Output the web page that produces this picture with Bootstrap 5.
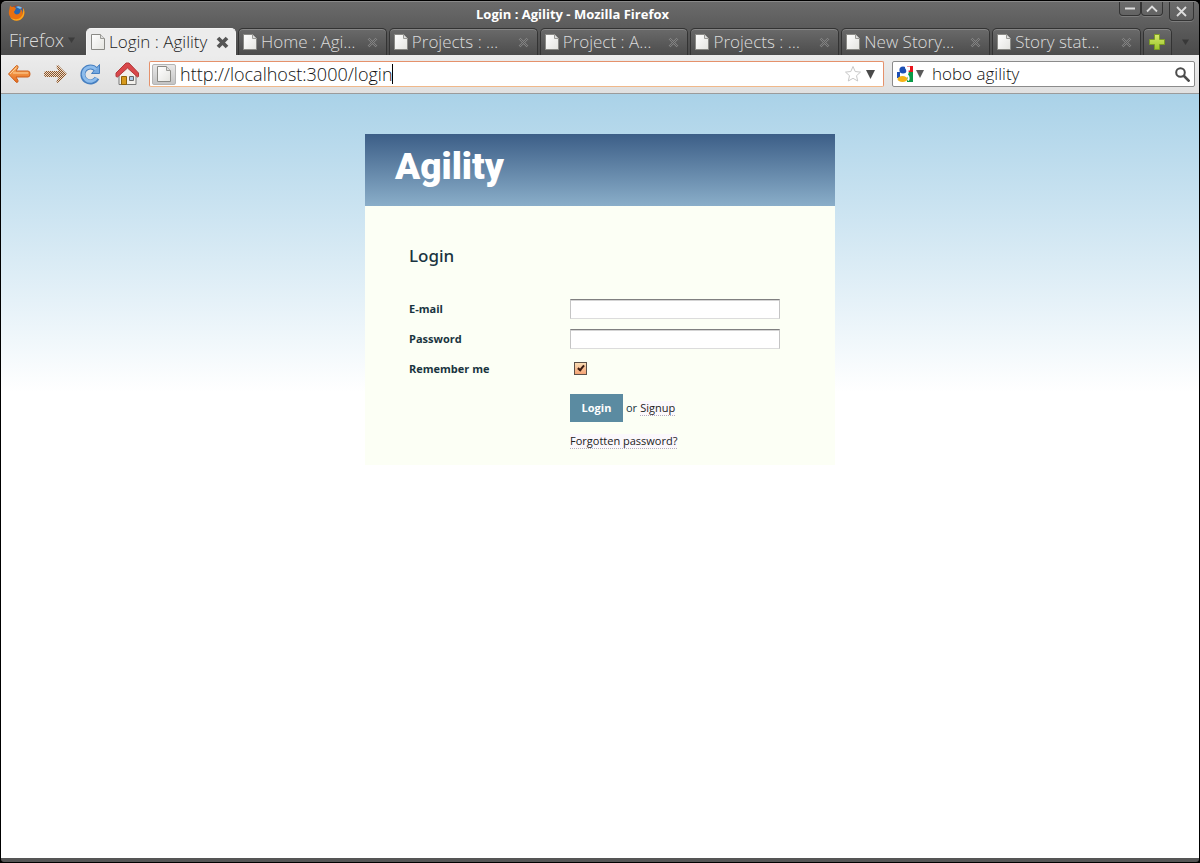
<!DOCTYPE html>
<html lang="en">
<head>
<meta charset="utf-8">
<meta name="viewport" content="width=device-width, initial-scale=1">
<title>Login : Agility</title>
<link href="https://cdn.jsdelivr.net/npm/bootstrap@5.3.0/dist/css/bootstrap.min.css" rel="stylesheet">
<style>
  body { background: #000; font-family: "Open Sans", "Noto Sans", sans-serif; }
  svg { display: block; flex: none; }
  button { background: none; border: 0; padding: 0; color: inherit; }
  .window { min-height: 100vh; padding: 1px; }
  .chrome { background: linear-gradient(#6b6b6b, #4a4a4a); border-top: 1px solid #8a8a8a; border-radius: 5px 5px 0 0; color: #dcdcdc; }
  .titlebar { height: 26px; padding-left: 7px; padding-right: 5px; }
  .win-title { font-size: 13px; font-weight: 700; line-height: 24px; color: #fff; }
  .win-btn { width: 22px; height: 14px; border: 1px solid #343434; border-top: 0; border-radius: 0 0 4px 4px; box-shadow: 0 1px 0 #7d7d7d; display: flex; align-items: center; justify-content: center; }
  .win-btn.close-win { width: 25px; height: 19px; margin-left: 6px; }
  .tabstrip { height: 27px; font-size: 17px; font-weight: 300; line-height: 24px; }
  .menu-btn { width: 85px; padding: 0 0 3px 8px; font-size: 18px; font-weight: 300; }
  .tabs { min-width: 0; gap: 2px; }
  .tab-item { height: 27px; min-width: 0; flex: 1 1 0; padding: 0 8px 0 4px; border: 1px solid #333; border-bottom: 0; border-radius: 5px 5px 0 0; background: linear-gradient(#6a6a6a, #4c4c4c); box-shadow: inset 0 1px 0 #858585; }
  .tab-item.current { flex: 0 0 150px; background: #ececec; color: #1c1c1c; border-color: #f4f4f4; box-shadow: none; padding-right: 6px; }
  .tab-item.tab-new { flex: 0 0 29px; padding: 0; }
  .tab-more { width: 27px; }
  .toolbar { height: 39px; background: linear-gradient(#ececec, #e0e0e0); border-bottom: 1px solid #9b9b9b; padding: 0 4px 0 6px; }
  .nav-btns { width: 142px; }
  .field { height: 26px; background: #fff; border: 1px solid #8b8b8b; border-radius: 2px; }
  .field input { border: 0; outline: 0; padding: 0; min-width: 0; font-size: 17px; font-weight: 300; line-height: 24px; color: #111; background: none; }
  .address { border-color: #e5916b; border-bottom-color: #f0b88a; }
  .site-id { width: 24px; height: 21px; margin: 0 4px 0 2px; border: 1px solid #b4b4b4; border-radius: 2px; background: linear-gradient(#e8e8e8, #c4c4c4); }
  .caret { width: 1px; height: 20px; background: #000; }
  .field.address input { width: 212px; font-size: 18px; }
  .search { width: 303px; }
  .page { background: #fff linear-gradient(#aad2e8, #fff) 0 0 / 100% 298px no-repeat; padding: 40px 16px; }
  .login-card { max-width: 470px; background: #fcfff5; color: #193440; font-size: 11px; }
  .login-head { height: 72px; padding: 0 30px; background: linear-gradient(#3c5e87, #8aaec9); }
  .login-head h1 { font-family: Roboto, sans-serif; font-size: 37px; font-weight: 900; line-height: 66px; color: #fff; margin: 0; }
  .login-body { padding: 38px 44px 16px; }
  .login-body h2 { font-family: "Noto Sans", sans-serif; font-size: 17px; font-weight: 500; line-height: 24px; margin: 0 0 26px; }
  .form-line { height: 30px; display: flex; align-items: center; }
  .form-line label, .spacer { width: 161px; margin: 0; flex: none; font-weight: 700; }
  .form-line .text-in { width: 210px; height: 20px; margin: 0; padding: 0 3px; background: #fff; border: 1px solid #c4c4c4; border-top-color: #808080; border-bottom-color: #dcdcdc; border-radius: 0; box-shadow: inset 0 1px 0 #d4d4d4; }
  .remember { appearance: none; width: 13px; height: 13px; margin: 0 0 2px 4px; border: 1px solid #5d5048; background: linear-gradient(#f9dcb4, #f5a476); position: relative; }
  .remember:checked::after { content: ""; position: absolute; left: 4px; top: 1px; width: 4px; height: 7px; border: solid #3a1a10; border-width: 0 2px 2px 0; transform: rotate(40deg); }
  .form-actions { gap: 3px; margin-top: 10px; }
  .form-actions .spacer { margin-right: -3px; }
  .submit { background: #5b8ba1; color: #fff; font-size: 11px; font-weight: 700; width: 53px; height: 28px; }
  .page-link-dotted { color: #222; background: #fbf8fc; text-decoration: none; border-bottom: 1px dotted #b5aebb; line-height: 14px; display: inline-block; }
  .bottom-edge { height: 4px; background: #555; border-radius: 0 0 3px 3px; }
</style>
</head>
<body>
<svg width="0" height="0" class="position-absolute" aria-hidden="true">
  <defs>
    <linearGradient id="gOrange" x2="0" y2="1"><stop stop-color="#fbb766"/><stop offset="1" stop-color="#e5691c"/></linearGradient>
    <linearGradient id="gGreen" x2="0" y2="1"><stop stop-color="#d6e86a"/><stop offset="1" stop-color="#9ac52a"/></linearGradient>
    <linearGradient id="gPaper" x2="1" y2="1"><stop stop-color="#fff"/><stop offset="1" stop-color="#e4e4e0"/></linearGradient>
    <pattern id="dots" width="2" height="2" patternUnits="userSpaceOnUse"><path d="M0 0h1v1H0zM1 1h1v1H1z" fill="#8a5428"/><path d="M1 0h1v1H1zM0 1h1v1H0z" fill="#ecdccc"/></pattern>
    <symbol id="doc" viewBox="0 0 14 16"><path d="M.5.5h9l4 4v11H.5z" fill="url(#gPaper)" stroke="#8a8a86"/><path d="M9.500.5v4h4" fill="#ddd" stroke="#9a9a96"/></symbol>
    <symbol id="tabx" viewBox="0 0 11 11"><path d="M1.500 1.500l8 8m0-8l-8 8" stroke="#858585" stroke-width="2.400"/><path d="M1.500 1.500l8 8m0-8l-8 8" stroke="#5a5a5a" stroke-width="1"/></symbol>
  </defs>
</svg>
<div class="window d-flex flex-column">
  <header class="chrome">
    <div class="titlebar d-flex align-items-start">
      <svg width="18" height="20" viewBox="0 0 18 20"><circle cx="9" cy="11" r="7.500" fill="#c9440e"/><circle cx="9.500" cy="9.500" r="5.500" fill="#2765ad"/><path d="M8 5c2-1.500 5-.5 6 1l-2 1-2-1z" fill="#79bdec"/><path d="M2 3.500c1 1 1.500 1.500 3 1.500 1.500 0 2.500.5 3 1.500L7 8c0 1-.5 1-1 1.500 0 3 4 4 5.500 1.500 1.500-1 1-3 .5-4 3 1 3.500 5 2 7.500-2 3-6 4-9 2.500-4-2-5-6-3.500-10z" fill="#e8700f"/><path d="M15 6c3 4 1 10-3 12-4 1.500-8 .5-10-3 4 3 8 3 11 0 2-2 2.500-5 2-9z" fill="#f8a91e"/></svg>
      <div class="win-title flex-fill text-center">Login : Agility - Mozilla Firefox</div>
      <div class="d-flex"><button class="win-btn" aria-label="Minimize"><svg width="10" height="3"><path d="M0 1.500h10" stroke="#ddd" stroke-width="2"/></svg></button><button class="win-btn" aria-label="Maximize"><svg width="12" height="8"><path d="M1 6.500l5-5 5 5" fill="none" stroke="#ddd" stroke-width="1.800"/></svg></button><button class="win-btn close-win" aria-label="Close"><svg width="11" height="11"><path d="M1 1l9 9m0-9l-9 9" stroke="#ddd" stroke-width="1.800"/></svg></button></div>
    </div>
    <nav class="tabstrip d-flex" aria-label="Tabs">
      <button class="menu-btn d-flex align-items-center gap-1">Firefox <svg width="7" height="6"><path d="M0 .5h7L3.500 6z" fill="#3c3c3c"/></svg></button>
      <div class="tabs d-flex flex-fill">
        <div class="tab-item current d-flex align-items-center gap-1"><svg width="14" height="16"><use href="#doc"/></svg><span class="text-nowrap flex-fill">Login : Agility</span><button aria-label="Close tab"><svg width="13" height="13"><path d="M2 2l9 9m0-9l-9 9" stroke="#555" stroke-width="3.800"/></svg></button></div>
        <div class="tab-item d-flex align-items-center gap-1"><svg width="14" height="16"><use href="#doc"/></svg><span class="flex-fill text-nowrap">Home : Agi…</span><button aria-label="Close tab"><svg width="11" height="11"><use href="#tabx"/></svg></button></div>
        <div class="tab-item d-flex align-items-center gap-1"><svg width="14" height="16"><use href="#doc"/></svg><span class="flex-fill text-nowrap">Projects : …</span><button aria-label="Close tab"><svg width="11" height="11"><use href="#tabx"/></svg></button></div>
        <div class="tab-item d-flex align-items-center gap-1"><svg width="14" height="16"><use href="#doc"/></svg><span class="flex-fill text-nowrap">Project : A…</span><button aria-label="Close tab"><svg width="11" height="11"><use href="#tabx"/></svg></button></div>
        <div class="tab-item d-flex align-items-center gap-1"><svg width="14" height="16"><use href="#doc"/></svg><span class="flex-fill text-nowrap">Projects : …</span><button aria-label="Close tab"><svg width="11" height="11"><use href="#tabx"/></svg></button></div>
        <div class="tab-item d-flex align-items-center gap-1"><svg width="14" height="16"><use href="#doc"/></svg><span class="flex-fill text-nowrap">New Story…</span><button aria-label="Close tab"><svg width="11" height="11"><use href="#tabx"/></svg></button></div>
        <div class="tab-item d-flex align-items-center gap-1"><svg width="14" height="16"><use href="#doc"/></svg><span class="flex-fill text-nowrap">Story stat…</span><button aria-label="Close tab"><svg width="11" height="11"><use href="#tabx"/></svg></button></div>
        <button class="tab-item tab-new d-flex align-items-center justify-content-center" aria-label="New tab"><svg width="16" height="16"><path d="M5.500.5h5v5h5v5h-5v5h-5v-5h-5v-5h5z" fill="url(#gGreen)" stroke="#7c9c24"/></svg></button>
      </div>
      <button class="tab-more d-flex align-items-center justify-content-center" aria-label="List tabs"><svg width="7" height="6"><path d="M0 .5h7L3.500 6z" fill="#383838"/></svg></button>
    </nav>
  </header>
  <div class="toolbar d-flex align-items-center">
    <div class="nav-btns d-flex align-items-center">
      <button aria-label="Back"><svg width="36" height="24"><path d="M9.500 3.500q2 0 1.500 2l-2 3.500h12q2 0 2 3t-2 3H9l2 3.500q.5 2-1.500 2L1.500 12z" fill="url(#gOrange)" stroke="#cc5f1c"/><path d="M3 12l6-6m-3 5h15" stroke="#fdd09a" fill="none"/></svg></button>
      <button aria-label="Forward"><svg width="36" height="24"><path d="M15 3q-2 0-1.500 2l2 4H3q-2 0-2 3t2 3h12.500l-2 4q-.5 2 1.500 2l9-9z" fill="url(#dots)"/></svg></button>
      <button aria-label="Reload"><svg width="36" height="24"><path d="M17 7.500A7.500 7.500 0 1 0 18 16" fill="none" stroke="#467fc0" stroke-width="5"/><path d="M20.500 2.500v9h-8z" fill="#74a8e0" stroke="#467fc0"/><path d="M17 7.500A7.200 7.200 0 1 0 17.500 16" fill="none" stroke="#8dbcec" stroke-width="3"/></svg></button>
      <button aria-label="Home"><svg width="24" height="24"><path d="M4 11v11.500h17V11l-8.500-8z" fill="#f2f0ec" stroke="#777"/><path d="M14 1h-3L1 11v3.500l1.500.5L12.500 6l10 9 1-.5V11z" fill="#d9474b" stroke="#b03a3c"/><path d="M6.500 14.500h5v8h-5z" fill="#d79a1d" stroke="#8f6208"/><path d="M14.500 14.500h4v4h-4z" fill="#a9c8e8" stroke="#666"/></svg></button>
    </div>
    <div class="field address d-flex align-items-center flex-fill">
      <button class="site-id d-flex align-items-center justify-content-center" aria-label="Site identity"><svg width="14" height="16"><use href="#doc"/></svg></button>
      <input type="text" value="http://localhost:3000/login" aria-label="Address"><span class="caret"></span>
      <svg class="ms-auto" width="18" height="18" viewBox="0 0 18 18"><path d="M9 1.500l2.200 5 5.300.6-4 3.600 1.200 5.300L9 13.300 4.300 16l1.200-5.300-4-3.600 5.300-.6z" fill="#fff" stroke="#c8c8c8"/></svg>
      <button class="px-1 me-1" aria-label="History"><svg width="9" height="9"><path d="M0 0h9L4.500 9z" fill="#4a4a4a"/></svg></button>
    </div>
    <div class="field search d-flex align-items-center ms-2">
      <button class="d-flex align-items-center ms-1" aria-label="Search engine"><svg width="18" height="16"><path d="M10 0h6v6h-6z" fill="#e8141c"/><path d="M10 6h6v10h-6z" fill="#0a9a48"/><path d="M0 6h3v6H0z" fill="#1d4fb4"/><circle cx="6" cy="4" r="3.600" fill="#1d4fb4"/><ellipse cx="5.500" cy="13" rx="5" ry="3" fill="#f5b314"/><path d="M8 1.500h4v2h-2q2 4-1 5 4 2 2 6" stroke="#fff" stroke-width="2" fill="none"/></svg><svg width="9" height="8"><path d="M1 0h8L5 8z" fill="#5a5a5a"/></svg></button>
      <input class="flex-fill ms-2" type="text" value="hobo agility" aria-label="Search">
      <button class="me-1" aria-label="Go"><svg width="15" height="15"><circle cx="5.500" cy="5.500" r="4.300" fill="none" stroke="#4c4c4c" stroke-width="2"/><path d="M8.500 8.500l6 6" stroke="#4c4c4c" stroke-width="2.600"/></svg></button>
    </div>
  </div>
  <main class="page flex-grow-1">
    <section class="login-card mx-auto">
      <div class="login-head"><h1>Agility</h1></div>
      <form class="login-body">
        <h2>Login</h2>
        <div class="form-line"><label for="email">E-mail</label><input class="text-in" type="text" id="email"></div>
        <div class="form-line"><label for="password">Password</label><input class="text-in" type="password" id="password"></div>
        <div class="form-line"><label for="remember">Remember me</label><input class="remember" type="checkbox" id="remember" checked></div>
        <div class="form-actions d-flex align-items-center"><span class="spacer"></span><button class="submit" type="button">Login</button><span>or</span><a class="page-link-dotted" href="#signup">Signup</a></div>
        <div class="d-flex mt-2 pt-1"><span class="spacer"></span><a class="page-link-dotted" href="#forgot">Forgotten password?</a></div>
      </form>
    </section>
  </main>
  <div class="bottom-edge"></div>
</div>
<script src="https://cdn.jsdelivr.net/npm/bootstrap@5.3.0/dist/js/bootstrap.bundle.min.js"></script>
</body>
</html>
